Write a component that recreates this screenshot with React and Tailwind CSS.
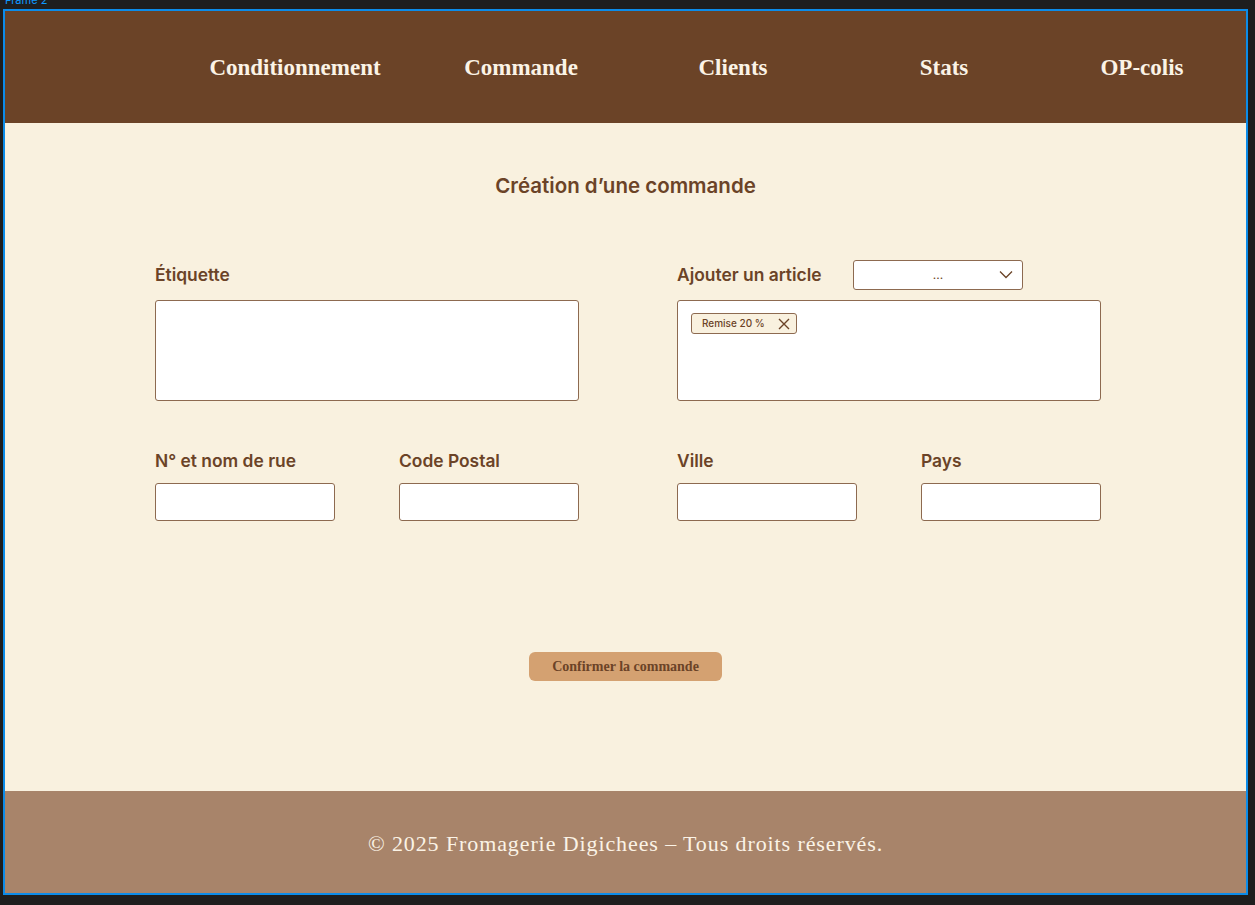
import React from "react";

const serif = { fontFamily: '"Liberation Serif", "DejaVu Serif", serif' };

const navItems = ["Conditionnement", "Commande", "Clients", "Stats", "OP-colis"];

function Field({ label }) {
  return (
    <div className="flex flex-col w-[180px]">
      <label className="text-[17.4px] leading-[24px] font-semibold text-[#6b4327]">{label}</label>
      <input
        type="text"
        className="mt-[10px] h-[38px] w-[180px] rounded-[3px] border border-[#8d6a50] bg-white"
      />
    </div>
  );
}

export default function App() {
  return (
    <div
      className="relative min-h-screen w-full bg-[#1e1e1e] pt-[9px] pl-[3px]"
      style={{ fontFamily: "Inter, 'Noto Sans', sans-serif" }}
    >
      {/* etiquette du frame */}
      <span className="absolute left-[5px] top-[-8px] text-[11px] text-[#0d99ff]">Frame 2</span>

      <div className="flex h-[886px] w-[1245px] flex-col border-2 border-[#0c8ce9] bg-[#f9f1df]">
        {/* Barre de navigation */}
        <header className="flex h-[112px] items-center bg-[#6b4327] pl-[200px] pt-[3px]">
          {navItems.map((item, i) => (
            <div
              key={item}
              className={
                "w-[180px] text-center text-[23px] font-bold text-[#fbf3e6] " +
                (i === 1 ? "ml-[46px]" : i === 2 ? "ml-[32px]" : i === 3 ? "ml-[31px]" : i === 4 ? "ml-[18px]" : "")
              }
              style={serif}
            >
              {item}
            </div>
          ))}
        </header>

        {/* Contenu principal */}
        <main className="flex flex-1 flex-col">
          <h1 className="mt-[49px] text-center text-[20.5px] leading-[28px] font-semibold text-[#6b4327]">
            Création d’une commande
          </h1>

          <div className="mt-[60px] flex gap-[98px] pl-[150px]">
            {/* Étiquette */}
            <div className="flex w-[424px] flex-col">
              <div className="flex h-[30px] items-center">
                <span className="text-[17.4px] font-semibold text-[#6b4327]">Étiquette</span>
              </div>
              <textarea className="mt-[10px] h-[101px] w-[424px] resize-none rounded-[3px] border border-[#8d6a50] bg-white" />
            </div>

            {/* Articles */}
            <div className="flex w-[424px] flex-col">
              <div className="flex h-[30px] items-center">
                <span className="w-[176px] text-[17.4px] font-semibold text-[#6b4327]">Ajouter un article</span>
                <div className="relative flex h-[30px] w-[170px] items-center justify-center rounded-[3px] border border-[#8d6a50] bg-white">
                  <span className="text-[12px] text-[#6b4327]">...</span>
                  <svg className="absolute right-[9px] top-[9px]" width="14" height="9" viewBox="0 0 14 9" fill="none">
                    <path d="M1 1.5 L7 7.5 L13 1.5" stroke="#6b4327" strokeWidth="1.3" />
                  </svg>
                </div>
              </div>
              <div className="mt-[10px] h-[101px] w-[424px] rounded-[3px] border border-[#8d6a50] bg-white pl-[13px] pt-[12px]">
                <div className="flex h-[21px] w-[106px] items-center rounded-[3px] border border-[#8d6a50] bg-[#f9f1df] pl-[10px]">
                  <span className="text-[10px] font-medium text-[#6b4327]">Remise 20 %</span>
                  <svg className="ml-auto mr-[6px]" width="12" height="12" viewBox="0 0 12 12" fill="none">
                    <path d="M1 1 L11 11 M11 1 L1 11" stroke="#6b4327" strokeWidth="1.4" />
                  </svg>
                </div>
              </div>
            </div>
          </div>

          {/* Adresse */}
          <div className="mt-[48px] flex pl-[150px]">
            <div className="flex w-[424px] gap-[64px]">
              <Field label="N° et nom de rue" />
              <Field label="Code Postal" />
            </div>
            <div className="ml-[98px] flex w-[424px] gap-[64px]">
              <Field label="Ville" />
              <Field label="Pays" />
            </div>
          </div>

          <div className="mt-[131px] flex justify-center">
            <button
              type="button"
              className="h-[29px] w-[193px] rounded-[6px] bg-[#d4a171] text-[14px] font-bold text-[#6b4327]"
              style={serif}
            >
              Confirmer la commande
            </button>
          </div>
        </main>

        {/* Pied de page */}
        <footer className="flex h-[102px] items-center justify-center bg-[#a8846a] pt-[2px]">
          <p className="text-[22px] tracking-[0.9px] text-[#fbf3e6]" style={serif}>
            © 2025 Fromagerie Digichees – Tous droits réservés.
          </p>
        </footer>
      </div>
    </div>
  );
}
